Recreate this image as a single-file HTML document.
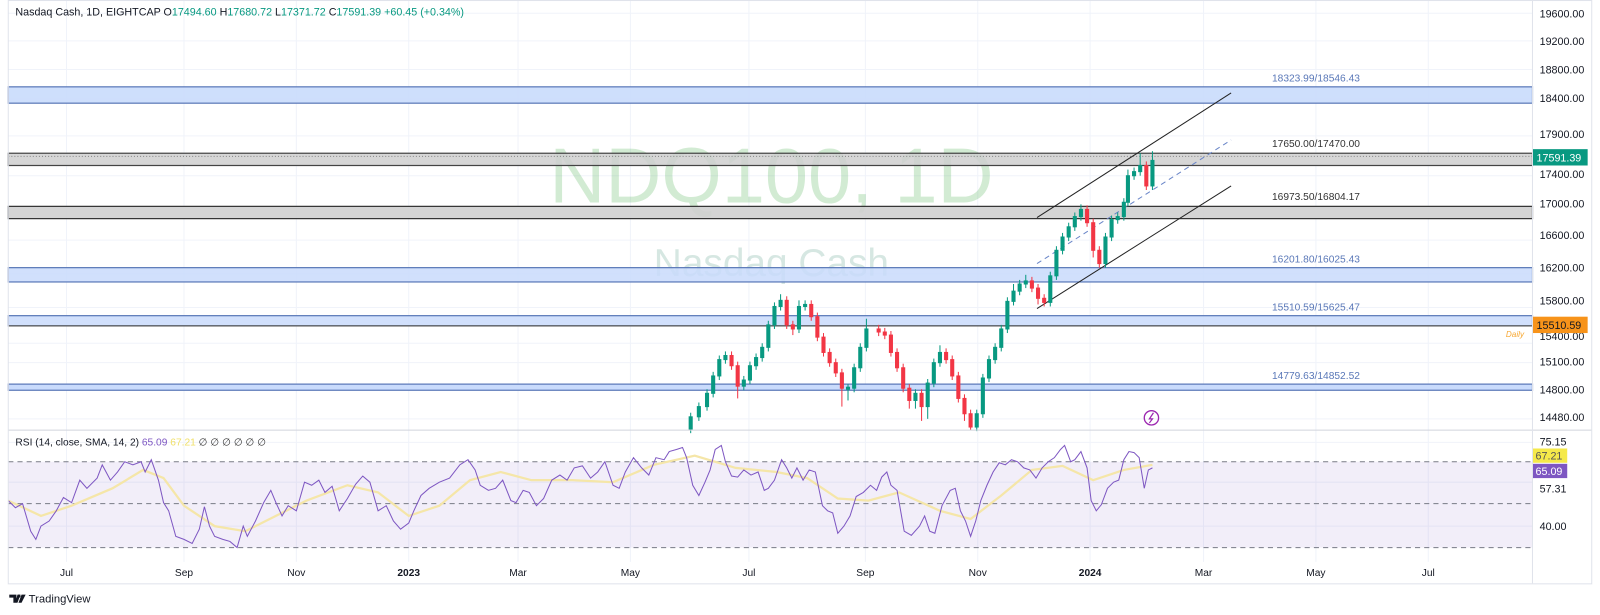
<!DOCTYPE html>
<html><head><meta charset="utf-8"><style>
html,body{margin:0;padding:0;background:#fff;width:1600px;height:615px;overflow:hidden}
svg{display:block}
text{font-family:"Liberation Sans",sans-serif}
</style></head><body>
<svg width="1600" height="615" viewBox="0 0 1566 602" xmlns="http://www.w3.org/2000/svg">
<rect width="1566" height="602" fill="#fff"/>
<g stroke="#f0f3fa" stroke-width="1">
<line x1="65" y1="0" x2="65" y2="550"/><line x1="180" y1="0" x2="180" y2="550"/><line x1="290" y1="0" x2="290" y2="550"/><line x1="400" y1="0" x2="400" y2="550"/><line x1="507" y1="0" x2="507" y2="550"/><line x1="617" y1="0" x2="617" y2="550"/><line x1="733" y1="0" x2="733" y2="550"/><line x1="847" y1="0" x2="847" y2="550"/><line x1="957" y1="0" x2="957" y2="550"/><line x1="1067" y1="0" x2="1067" y2="550"/><line x1="1178" y1="0" x2="1178" y2="550"/><line x1="1288" y1="0" x2="1288" y2="550"/><line x1="1398" y1="0" x2="1398" y2="550"/>
<line x1="8" y1="13" x2="1500" y2="13"/><line x1="8" y1="40" x2="1500" y2="40"/><line x1="8" y1="68" x2="1500" y2="68"/><line x1="8" y1="97" x2="1500" y2="97"/><line x1="8" y1="133" x2="1500" y2="133"/><line x1="8" y1="172" x2="1500" y2="172"/><line x1="8" y1="203" x2="1500" y2="203"/><line x1="8" y1="235" x2="1500" y2="235"/><line x1="8" y1="268" x2="1500" y2="268"/><line x1="8" y1="301" x2="1500" y2="301"/><line x1="8" y1="336" x2="1500" y2="336"/><line x1="8" y1="355" x2="1500" y2="355"/><line x1="8" y1="382" x2="1500" y2="382"/><line x1="8" y1="410" x2="1500" y2="410"/>
<line x1="8" y1="433" x2="1500" y2="433"/><line x1="8" y1="472" x2="1500" y2="472"/><line x1="8" y1="515" x2="1500" y2="515"/>
</g>
<text x="755" y="198" font-size="76" fill="#4caf50" fill-opacity="0.25" text-anchor="middle">NDQ100, 1D</text>
<text x="755" y="270" font-size="38" fill="#5a9e8a" fill-opacity="0.25" text-anchor="middle">Nasdaq Cash</text>
<g stroke-width="1.2">
<rect x="8" y="85" width="1492" height="16" fill="#c9dbfc" fill-opacity="0.9" stroke="#5a78b8"/>
<rect x="8" y="150" width="1492" height="12" fill="#cfcfcf" fill-opacity="0.85" stroke="#444"/>
<line x1="8" y1="153" x2="1500" y2="153" stroke="#777" stroke-dasharray="1,2" stroke-width="0.8"/>
<rect x="8" y="202" width="1492" height="12" fill="#cfcfcf" fill-opacity="0.9" stroke="#333"/>
<rect x="8" y="262" width="1492" height="14" fill="#c9dbfc" fill-opacity="0.85" stroke="#5a78b8"/>
<rect x="8" y="309" width="1492" height="10" fill="#c9dbfc" fill-opacity="0.85" stroke="#5a78b8"/>
<line x1="8" y1="319" x2="1500" y2="319" stroke="#555"/>
<rect x="8" y="376" width="1492" height="6" fill="#c9dbfc" stroke="#5a78b8"/>
</g>
<g font-size="10">
<text x="1245" y="80" fill="#5a78b8">18323.99/18546.43</text>
<text x="1245" y="144" fill="#333">17650.00/17470.00</text>
<text x="1245" y="196" fill="#333">16973.50/16804.17</text>
<text x="1245" y="257" fill="#5a78b8">16201.80/16025.43</text>
<text x="1245" y="304" fill="#5a78b8">15510.59/15625.47</text>
<text x="1245" y="371" fill="#5a78b8">14779.63/14852.52</text>
</g>
<g stroke="#222" stroke-width="1">
<line x1="1015" y1="213" x2="1205" y2="91"/>
<line x1="1015" y1="302" x2="1205" y2="182"/>
<line x1="1015" y1="258" x2="1205" y2="137" stroke="#6a86c8" stroke-dasharray="5,4"/>
</g>
<g stroke-width="1">
<g fill="#089981" stroke="#089981">
<line x1="676" y1="404" x2="676" y2="424"/><rect x="674.5" y="408" width="3" height="12"/>
<line x1="684" y1="394" x2="684" y2="412"/><rect x="682.5" y="398" width="3" height="10"/>
<line x1="692" y1="381" x2="692" y2="402"/><rect x="690.5" y="385" width="3" height="13"/>
<line x1="698" y1="364" x2="698" y2="389"/><rect x="696.5" y="368" width="3" height="17"/>
<line x1="704" y1="348" x2="704" y2="372"/><rect x="702.5" y="352" width="3" height="16"/>
<line x1="710" y1="344" x2="710" y2="356"/><rect x="708.5" y="348" width="3" height="4"/>
<line x1="728" y1="368" x2="728" y2="382"/><rect x="726.5" y="372" width="3" height="6"/>
<line x1="734" y1="354" x2="734" y2="376"/><rect x="732.5" y="358" width="3" height="14"/>
<line x1="740" y1="346" x2="740" y2="362"/><rect x="738.5" y="350" width="3" height="8"/>
<line x1="746" y1="336" x2="746" y2="354"/><rect x="744.5" y="340" width="3" height="10"/>
<line x1="752" y1="314" x2="752" y2="344"/><rect x="750.5" y="318" width="3" height="22"/>
<line x1="758" y1="296" x2="758" y2="322"/><rect x="756.5" y="300" width="3" height="18"/>
<line x1="764" y1="288" x2="764" y2="304"/><rect x="762.5" y="294" width="3" height="6"/>
<line x1="782" y1="294" x2="782" y2="326"/><rect x="780.5" y="300" width="3" height="22"/>
<line x1="788" y1="294" x2="788" y2="304"/><rect x="786.5" y="298" width="3" height="2"/>
<line x1="830" y1="376" x2="830" y2="392"/><rect x="828.5" y="379" width="3" height="2"/>
<line x1="836" y1="356" x2="836" y2="384"/><rect x="834.5" y="360" width="3" height="20"/>
<line x1="842" y1="336" x2="842" y2="364"/><rect x="840.5" y="340" width="3" height="20"/>
<line x1="848" y1="312" x2="848" y2="344"/><rect x="846.5" y="322" width="3" height="18"/>
<line x1="896" y1="381" x2="896" y2="400"/><rect x="894.5" y="385" width="3" height="7"/>
<line x1="908" y1="371" x2="908" y2="410"/><rect x="906.5" y="375" width="3" height="23"/>
<line x1="914" y1="351" x2="914" y2="379"/><rect x="912.5" y="355" width="3" height="20"/>
<line x1="920" y1="338" x2="920" y2="359"/><rect x="918.5" y="345" width="3" height="10"/>
<line x1="956" y1="401" x2="956" y2="422"/><rect x="954.5" y="405" width="3" height="13"/>
<line x1="962" y1="366" x2="962" y2="409"/><rect x="960.5" y="370" width="3" height="35"/>
<line x1="968" y1="348" x2="968" y2="374"/><rect x="966.5" y="352" width="3" height="18"/>
<line x1="974" y1="336" x2="974" y2="356"/><rect x="972.5" y="340" width="3" height="12"/>
<line x1="980" y1="318" x2="980" y2="344"/><rect x="978.5" y="322" width="3" height="18"/>
<line x1="986" y1="291" x2="986" y2="326"/><rect x="984.5" y="295" width="3" height="27"/>
<line x1="992" y1="278" x2="992" y2="299"/><rect x="990.5" y="285" width="3" height="10"/>
<line x1="998" y1="274" x2="998" y2="289"/><rect x="996.5" y="278" width="3" height="7"/>
<line x1="1004" y1="269" x2="1004" y2="282"/><rect x="1002.5" y="275" width="3" height="3"/>
<line x1="1028" y1="266" x2="1028" y2="300"/><rect x="1026.5" y="270" width="3" height="26"/>
<line x1="1034" y1="241" x2="1034" y2="274"/><rect x="1032.5" y="245" width="3" height="25"/>
<line x1="1040" y1="228" x2="1040" y2="249"/><rect x="1038.5" y="232" width="3" height="13"/>
<line x1="1046" y1="218" x2="1046" y2="236"/><rect x="1044.5" y="222" width="3" height="10"/>
<line x1="1052" y1="208" x2="1052" y2="226"/><rect x="1050.5" y="212" width="3" height="10"/>
<line x1="1058" y1="200" x2="1058" y2="216"/><rect x="1056.5" y="205" width="3" height="7"/>
<line x1="1082" y1="228" x2="1082" y2="262"/><rect x="1080.5" y="232" width="3" height="26"/>
<line x1="1088" y1="211" x2="1088" y2="236"/><rect x="1086.5" y="215" width="3" height="17"/>
<line x1="1094" y1="208" x2="1094" y2="219"/><rect x="1092.5" y="212" width="3" height="3"/>
<line x1="1100" y1="194" x2="1100" y2="216"/><rect x="1098.5" y="198" width="3" height="14"/>
<line x1="1104" y1="166" x2="1104" y2="202"/><rect x="1102.5" y="172" width="3" height="26"/>
<line x1="1110" y1="164" x2="1110" y2="176"/><rect x="1108.5" y="168" width="3" height="4"/>
<line x1="1116" y1="150" x2="1116" y2="172"/><rect x="1114.5" y="162" width="3" height="6"/>
<line x1="1128" y1="148" x2="1128" y2="186"/><rect x="1126.5" y="157" width="3" height="25"/>
</g>
<g fill="#f23645" stroke="#f23645">
<line x1="716" y1="344" x2="716" y2="362"/><rect x="714.5" y="348" width="3" height="10"/>
<line x1="722" y1="354" x2="722" y2="390"/><rect x="720.5" y="358" width="3" height="20"/>
<line x1="770" y1="290" x2="770" y2="322"/><rect x="768.5" y="294" width="3" height="24"/>
<line x1="776" y1="314" x2="776" y2="328"/><rect x="774.5" y="318" width="3" height="4"/>
<line x1="794" y1="294" x2="794" y2="314"/><rect x="792.5" y="298" width="3" height="12"/>
<line x1="800" y1="306" x2="800" y2="334"/><rect x="798.5" y="310" width="3" height="20"/>
<line x1="806" y1="326" x2="806" y2="349"/><rect x="804.5" y="330" width="3" height="15"/>
<line x1="812" y1="341" x2="812" y2="359"/><rect x="810.5" y="345" width="3" height="10"/>
<line x1="818" y1="351" x2="818" y2="369"/><rect x="816.5" y="355" width="3" height="10"/>
<line x1="824" y1="361" x2="824" y2="398"/><rect x="822.5" y="365" width="3" height="15"/>
<line x1="860" y1="318" x2="860" y2="329"/><rect x="858.5" y="322" width="3" height="3"/>
<line x1="866" y1="321" x2="866" y2="332"/><rect x="864.5" y="325" width="3" height="3"/>
<line x1="872" y1="324" x2="872" y2="349"/><rect x="870.5" y="328" width="3" height="17"/>
<line x1="878" y1="341" x2="878" y2="364"/><rect x="876.5" y="345" width="3" height="15"/>
<line x1="884" y1="356" x2="884" y2="384"/><rect x="882.5" y="360" width="3" height="20"/>
<line x1="890" y1="376" x2="890" y2="400"/><rect x="888.5" y="380" width="3" height="12"/>
<line x1="902" y1="381" x2="902" y2="412"/><rect x="900.5" y="385" width="3" height="13"/>
<line x1="926" y1="341" x2="926" y2="356"/><rect x="924.5" y="345" width="3" height="7"/>
<line x1="932" y1="348" x2="932" y2="372"/><rect x="930.5" y="352" width="3" height="16"/>
<line x1="938" y1="364" x2="938" y2="394"/><rect x="936.5" y="368" width="3" height="22"/>
<line x1="944" y1="386" x2="944" y2="412"/><rect x="942.5" y="390" width="3" height="15"/>
<line x1="950" y1="401" x2="950" y2="421"/><rect x="948.5" y="405" width="3" height="13"/>
<line x1="1010" y1="271" x2="1010" y2="286"/><rect x="1008.5" y="275" width="3" height="7"/>
<line x1="1016" y1="278" x2="1016" y2="298"/><rect x="1014.5" y="282" width="3" height="10"/>
<line x1="1022" y1="288" x2="1022" y2="300"/><rect x="1020.5" y="292" width="3" height="4"/>
<line x1="1064" y1="201" x2="1064" y2="222"/><rect x="1062.5" y="205" width="3" height="13"/>
<line x1="1070" y1="214" x2="1070" y2="252"/><rect x="1068.5" y="218" width="3" height="27"/>
<line x1="1076" y1="241" x2="1076" y2="262"/><rect x="1074.5" y="245" width="3" height="13"/>
<line x1="1122" y1="158" x2="1122" y2="186"/><rect x="1120.5" y="162" width="3" height="20"/>
</g>
</g>
<circle cx="1127" cy="409" r="7" fill="none" stroke="#9c27b0" stroke-width="1.3"/>
<path d="M1129 404 L1125 410 L1128 410 L1125 414" fill="none" stroke="#9c27b0" stroke-width="1.2"/>
<line x1="8" y1="421" x2="1558" y2="421" stroke="#d1d4dc"/>
<rect x="8" y="452" width="1492" height="84" fill="#7e57c2" fill-opacity="0.1"/>
<g stroke="#787b86" stroke-dasharray="5,4" stroke-width="1">
<line x1="8" y1="452" x2="1500" y2="452"/><line x1="8" y1="493" x2="1500" y2="493"/><line x1="8" y1="536" x2="1500" y2="536"/>
</g>
<polyline fill="none" stroke="#f5e6a8" stroke-width="2.2" points="8,490 40,505 70,495 110,478 140,460 160,468 180,495 210,515 240,520 270,505 300,490 340,475 370,482 400,505 430,495 460,470 490,462 520,470 560,470 600,472 640,455 680,446 720,458 760,462 790,468 820,488 850,490 880,482 920,500 950,508 980,485 1010,460 1040,456 1070,470 1100,460 1128,455"/>
<polyline fill="none" stroke="#7e57c2" stroke-width="1" points="8,490 15,497 22,493 30,520 35,528 40,515 48,510 55,500 62,487 70,492 78,470 85,478 95,468 100,455 108,470 115,462 122,452 130,455 138,452 142,462 148,450 155,470 160,492 165,500 172,525 180,528 188,532 195,518 200,496 205,515 210,525 218,528 225,530 232,536 238,515 242,525 250,510 258,492 265,480 270,492 276,505 282,495 290,500 298,472 305,475 312,470 318,482 325,476 332,500 340,488 348,474 355,466 362,472 370,500 378,495 385,510 392,518 400,512 405,500 412,485 420,478 430,472 440,468 450,455 458,450 465,460 470,475 478,480 485,478 492,470 500,490 505,492 512,480 518,482 525,495 532,488 540,470 548,465 555,470 562,458 570,456 578,468 585,462 592,452 600,475 606,478 612,462 620,448 628,458 635,465 642,448 650,450 655,442 662,440 668,438 672,448 678,475 684,485 690,472 695,460 700,440 706,436 710,452 716,466 722,467 728,460 735,465 742,462 748,480 752,478 758,470 765,450 770,458 775,468 780,458 786,470 792,460 798,462 805,495 810,500 815,502 820,522 826,515 832,505 838,486 845,482 852,475 858,480 863,467 868,462 872,475 878,480 885,520 892,524 900,515 905,505 910,520 915,522 922,495 930,480 935,478 940,500 945,510 950,525 955,510 960,490 966,475 972,462 978,453 984,455 990,450 996,452 1002,458 1008,460 1014,468 1020,458 1026,452 1032,448 1038,440 1042,436 1048,452 1052,450 1058,442 1064,458 1068,490 1073,500 1078,494 1084,478 1090,472 1095,470 1100,450 1105,442 1110,443 1115,448 1120,478 1124,460 1128,458"/>
<text x="15" y="436" font-size="10" fill="#131722">RSI (14, close, SMA, 14, 2) <tspan fill="#7e57c2">65.09</tspan> <tspan fill="#f0e06a">67.21</tspan> <tspan fill="#333">  ∅  ∅  ∅  ∅  ∅  ∅</tspan></text>
<text x="15" y="15" font-size="10.5" fill="#131722">Nasdaq Cash, 1D, EIGHTCAP  O<tspan fill="#089981">17494.60</tspan>  H<tspan fill="#089981">17680.72</tspan>  L<tspan fill="#089981">17371.72</tspan>  C<tspan fill="#089981">17591.39</tspan>  <tspan fill="#089981">+60.45 (+0.34%)</tspan></text>
<g font-size="10.5" fill="#131722">
<text x="1507" y="17">19600.00</text><text x="1507" y="44">19200.00</text><text x="1507" y="72">18800.00</text><text x="1507" y="100">18400.00</text><text x="1507" y="135">17900.00</text><text x="1507" y="174">17400.00</text><text x="1507" y="203">17000.00</text><text x="1507" y="234">16600.00</text><text x="1507" y="266">16200.00</text><text x="1507" y="298">15800.00</text><text x="1507" y="333">15400.00</text><text x="1507" y="358">15100.00</text><text x="1507" y="385">14800.00</text><text x="1507" y="412">14480.00</text>
<text x="1507" y="436">75.15</text><text x="1507" y="482">57.31</text><text x="1507" y="519">40.00</text>
</g>
<rect x="1500" y="146" width="54" height="16" fill="#089981"/>
<text x="1504" y="158" font-size="10.5" fill="#fff">17591.39</text>
<rect x="1500" y="310" width="54" height="16" fill="#f7931a"/>
<text x="1504" y="322" font-size="10.5" fill="#131722">15510.59</text>
<text x="1474" y="330" font-size="8" fill="#f7a833" font-style="italic">Daily</text>
<rect x="1500" y="439" width="34" height="14" fill="#f5e94a"/>
<text x="1503" y="450" font-size="10.5" fill="#555">67.21</text>
<rect x="1500" y="454" width="34" height="14" fill="#7e57c2"/>
<text x="1503" y="465" font-size="10.5" fill="#fff">65.09</text>
<g font-size="10" fill="#131722" text-anchor="middle">
<text x="65" y="564">Jul</text><text x="180" y="564">Sep</text><text x="290" y="564">Nov</text><text x="400" y="564" font-weight="bold">2023</text><text x="507" y="564">Mar</text><text x="617" y="564">May</text><text x="733" y="564">Jul</text><text x="847" y="564">Sep</text><text x="957" y="564">Nov</text><text x="1067" y="564" font-weight="bold">2024</text><text x="1178" y="564">Mar</text><text x="1288" y="564">May</text><text x="1398" y="564">Jul</text>
</g>
<rect x="8" y="0.5" width="1550" height="571" fill="none" stroke="#e0e3eb"/>
<line x1="1500" y1="0" x2="1500" y2="571" stroke="#e0e3eb"/>
<path d="M9 582 h7 v8 h-3 v-5 h-4z M17 582 h3 l-3 8 h-2z M21 582 h4 l-4 8 h-3z" fill="#131722"/>
<circle cx="18.5" cy="583.5" r="1.5" fill="#131722"/>
<text x="28" y="590" font-size="11" fill="#131722">TradingView</text>
</svg>
</body></html>
